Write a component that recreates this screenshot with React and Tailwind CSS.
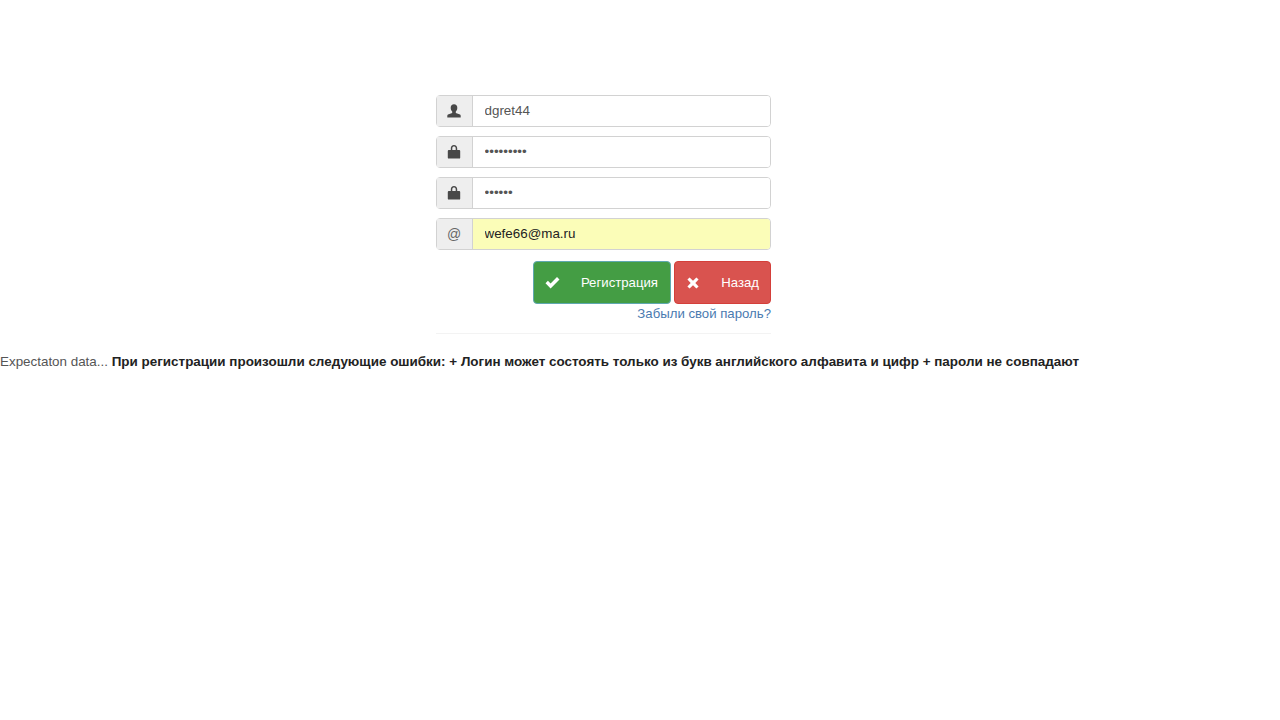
import React from 'react';

const UserIcon = () => (
    <svg width="14" height="14" viewBox="0 0 14 14" fill="#484848">
        <path d="M7 0.3C4.9 0.3 3.700 1.800 3.700 3.800c0 1.600.6 3 1.500 3.800v1.300L1 10.600C.5 10.900.3 11.300.3 12v1.600h13.400V12c0-.7-.2-1.100-.7-1.400L8.800 8.900V7.600c.9-.8 1.500-2.200 1.500-3.800C10.300 1.800 9.100.3 7 .3z" />
    </svg>
);

const LockIcon = () => (
    <svg width="14" height="14" viewBox="0 0 14 14" fill="#484848">
        <path fillRule="evenodd" d="M7 0C5 0 3.800 1.300 3.800 3.200V5H1.700c-.5 0-.9.400-.9.900v6.800c0 .5.400.9.900.9h10.600c.5 0 .9-.4.900-.9V5.900c0-.5-.4-.9-.9-.9h-2.100V3.200C10.200 1.300 9 0 7 0zM5.300 3.200C5.300 2.200 6 1.500 7 1.500s1.700.7 1.700 1.700V5H5.300V3.200z" />
    </svg>
);

const CheckIcon = () => (
    <svg width="15" height="13" viewBox="0 0 15 13" fill="#fff">
        <path d="M.5 7.200 2.900 4.800 5.600 7.500 12 1l2.500 2.400-8.900 9.100z" />
    </svg>
);

const CrossIcon = () => (
    <svg width="12" height="12" viewBox="0 0 12 12" fill="#fff">
        <path d="M2.600.4 6 3.700 9.400.4 11.600 2.600 8.300 6l3.300 3.400-2.200 2.200L6 8.300l-3.400 3.300L.4 9.400 3.700 6 .4 2.600z" />
    </svg>
);

function Field({ addon, value, type = 'text', filled }) {
    return (
        <div className="flex h-[32px] w-full rounded-[4px] border border-[#d2d2d2]">
            <span className="flex w-[36px] shrink-0 items-center justify-center border-r border-[#d2d2d2] bg-[#eee] pr-[1px] text-[14px] text-[#666]">
                {addon}
            </span>
            <input
                readOnly
                type={type}
                value={value}
                className={`min-w-0 flex-1 rounded-r-[3px] pl-[11.500px] text-[13.400px] outline-none ${filled ? 'bg-[#fbfdb8] text-[#222]' : 'bg-white text-[#555]'}`}
            />
        </div>
    );
}

export default function App() {
    return (
        <div className="min-h-[720px] bg-white font-['Liberation_Sans',Arial,sans-serif] text-[13.400px] text-[#333]">
            <div className="ml-[436px] flex w-[335px] flex-col pt-[95px]">
                <div className="flex flex-col gap-[9px]">
                    <Field addon={<UserIcon />} value="dgret44" />
                    <Field addon={<LockIcon />} value="123456789" type="password" />
                    <Field addon={<LockIcon />} value="123456" type="password" />
                    <Field addon="@" value="wefe66@ma.ru" filled />
                </div>
                <div className="mt-[11px] flex justify-end gap-[3px]">
                    <button className="flex h-[43px] w-[138px] items-center rounded-[4px] border border-[#5fa8b0] bg-[#449d44] pl-[11px] pr-[12px] text-[13.200px] text-white">
                        <CheckIcon />
                        <span className="ml-auto">Регистрация</span>
                    </button>
                    <button className="flex h-[43px] w-[97px] items-center rounded-[4px] border border-[#d43f3a] bg-[#d9534f] pl-[12px] pr-[11px] text-[13.200px] text-white">
                        <CrossIcon />
                        <span className="ml-auto">Назад</span>
                    </button>
                </div>
                <a className="mt-[1px] self-end text-[13.200px] leading-[17px] text-[#4a7ab0]">Забыли свой пароль?</a>
                <hr className="mt-[11px] border-t border-[#f3f3f3]" />
            </div>
            <p className="mt-[18px] whitespace-nowrap leading-[20px]">
                <span className="text-[#555]">Expectaton data... </span>
                <b className="text-[13.450px] text-[#222]">При регистрации произошли следующие ошибки: + Логин может состоять только из букв английского алфавита и цифр + пароли не совпадают</b>
            </p>
        </div>
    );
}
